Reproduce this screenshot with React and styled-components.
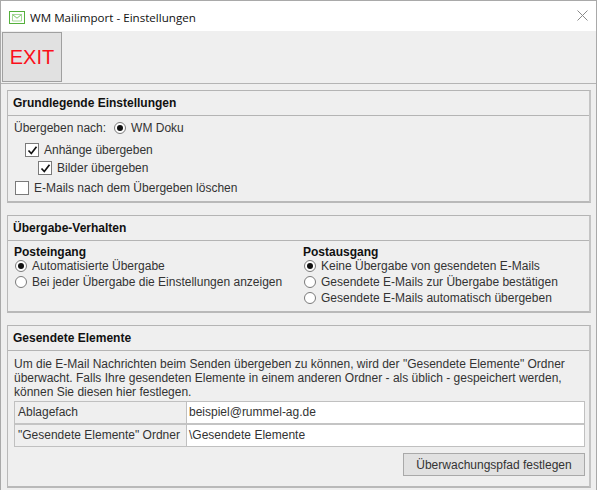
import React from "react";
import styled, { createGlobalStyle } from "styled-components";

const Global = createGlobalStyle`
  html, body { margin: 0; padding: 0; background: #efefef; }
  body { font-family: "Liberation Sans", Arial, sans-serif; }
`;

const Win = styled.div`
  width: 597px;
  height: 490px;
  box-sizing: border-box;
  border: 1px solid #a9a9a9;
  border-bottom: 0;
  background: #efefef;
  display: flex;
  flex-direction: column;
  overflow: hidden;
`;

const TitleBar = styled.div`
  height: 30px;
  flex: none;
  background: #fff;
  display: flex;
  align-items: center;
  padding: 0 8px 0 8px;
  gap: 5px;
`;

const Title = styled.div`
  font-family: "Open Sans", "Noto Sans", sans-serif;
  font-size: 11.6px;
  color: #111;
  flex: 1;
  margin-top: 3px;
`;

const Toolbar = styled.div`
  height: 53px;
  flex: none;
  box-sizing: border-box;
  border-bottom: 1px solid #b4b4b4;
  padding: 1px 0 0 1px;
`;

const ExitButton = styled.button`
  display: block;
  width: 60px;
  height: 50px;
  box-sizing: border-box;
  background: #e1e1e1;
  border: 1px solid #a0a0a0;
  color: #fb0f1a;
  font-family: "Liberation Sans", sans-serif;
  font-size: 20px;
  padding: 0;
`;

const Content = styled.div`
  padding: 6px 5px 0 6px;
  display: flex;
  flex-direction: column;
  gap: 12px;
`;

const Section = styled.section`
  height: ${(p) => p.$h}px;
  box-sizing: border-box;
  border-style: solid;
  border-width: 1px 2px 2px 1px;
  border-color: #b4b4b4 #c4c4c4 #b9b9b9 #b9b9b9;
  display: flex;
  flex-direction: column;
`;

const SectionHead = styled.h2`
  height: 25px;
  flex: none;
  box-sizing: border-box;
  margin: 0;
  padding: 0 0 0 5px;
  border-bottom: 1px solid #b4b4b4;
  font-size: 12px;
  font-weight: bold;
  line-height: 24px;
  color: #111;
`;

const SectionBody = styled.div`
  padding: ${(p) => p.$pad};
  font-size: 12px;
  color: #333;
`;

const Row = styled.div`
  display: flex;
  align-items: center;
  height: 16px;
  margin-top: ${(p) => p.$top || 0}px;
  padding-left: ${(p) => p.$indent || 0}px;
  gap: ${(p) => p.$gap || 5}px;
  white-space: nowrap;
`;

const Box = styled.span`
  width: 14px;
  height: 14px;
  flex: none;
  box-sizing: border-box;
  background: #fff;
  border: 1px solid #7a7a7a;
  display: flex;
  align-items: center;
  justify-content: center;
`;

const Radio = styled.span`
  width: 12px;
  height: 12px;
  flex: none;
  box-sizing: border-box;
  border-radius: 50%;
  background: #fff;
  border: 1px solid #7a7a7a;
  display: flex;
  align-items: center;
  justify-content: center;
  &::after {
    content: "";
    display: ${(p) => (p.$on ? "block" : "none")};
    width: 6px;
    height: 6px;
    border-radius: 50%;
    background: #111;
  }
`;

const Columns = styled.div`
  display: grid;
  grid-template-columns: 289px 1fr;
  padding: 4px 0 0 6px;
  font-size: 12px;
  color: #333;
`;

const GroupLabel = styled.div`
  font-weight: bold;
  color: #111;
  height: 13px;
  line-height: 14px;
`;

const RadioRow = styled.div`
  display: flex;
  align-items: center;
  gap: 5px;
  height: 16px;
  padding-left: 1px;
  white-space: nowrap;
`;

const Hint = styled.p`
  margin: 0;
  line-height: 14px;
  font-size: 12px;
  color: #333;
`;

const Table = styled.div`
  margin-top: 2px;
  display: grid;
  grid-template-columns: 171px 1fr;
  border: 1px solid #c0c0c0;
`;

const Cell = styled.div`
  height: ${(p) => (p.$second ? 23 : 21)}px;
  box-sizing: border-box;
  padding: ${(p) => (p.$field ? "0 2px" : "0 3px")};
  line-height: 21px;
  font-size: 12px;
  color: #333;
  background: ${(p) => (p.$field ? "#fff" : "#efefef")};
  border-left: ${(p) => (p.$field ? "1px solid #c0c0c0" : "0")};
  border-top: ${(p) => (p.$second ? "2px solid #c4c4c4" : "0")};
  white-space: nowrap;
`;

const ButtonRow = styled.div`
  display: flex;
  justify-content: flex-end;
  margin-top: 6px;
`;

const PathButton = styled.button`
  width: 182px;
  height: 23px;
  box-sizing: border-box;
  background: #e1e1e1;
  border: 1px solid #a9a9a9;
  font-family: "Liberation Sans", sans-serif;
  font-size: 12px;
  color: #333;
  padding: 0;
`;

const MailIcon = () => (
  <svg width="16" height="13" viewBox="0 0 16 13" fill="none" style={{ marginTop: 3 }}>
    <rect x="0.5" y="0.5" width="15" height="12" stroke="#55b03c" />
    <path d="M3.5 3.5h9v6.5h-9z" stroke="#a6d898" />
    <path d="M3.5 3.5L8 7.2l4.5-3.7" stroke="#7cc46a" />
  </svg>
);

const CloseIcon = () => (
  <svg width="11" height="11" viewBox="0 0 11 11" fill="none" style={{ marginBottom: 2 }}>
    <path d="M0.5 0.5l10 10M10.5 0.5l-10 10" stroke="#8a8a8a" strokeWidth="1" />
  </svg>
);

const Check = () => (
  <svg width="11" height="11" viewBox="0 0 11 11" fill="none">
    <path d="M1.5 5.5l2.8 3L9.5 1.8" stroke="#111" strokeWidth="1.7" />
  </svg>
);

export default function App() {
  return (
    <>
      <Global />
      <Win>
        <TitleBar>
          <MailIcon />
          <Title>WM Mailimport - Einstellungen</Title>
          <CloseIcon />
        </TitleBar>
        <Toolbar>
          <ExitButton>EXIT</ExitButton>
        </Toolbar>
        <Content>
          <Section $h={113}>
            <SectionHead>Grundlegende Einstellungen</SectionHead>
            <SectionBody $pad="4px 5px 0 6px">
              <Row $gap={7}>
                <span>Übergeben nach:</span>
                <RadioRow>
                  <Radio $on />
                  <span>WM Doku</span>
                </RadioRow>
              </Row>
              <Row $indent={11} $top={6}>
                <Box><Check /></Box>
                <span>Anhänge übergeben</span>
              </Row>
              <Row $indent={24} $top={2}>
                <Box><Check /></Box>
                <span>Bilder übergeben</span>
              </Row>
              <Row $indent={1} $top={4}>
                <Box />
                <span>E-Mails nach dem Übergeben löschen</span>
              </Row>
            </SectionBody>
          </Section>

          <Section $h={98}>
            <SectionHead>Übergabe-Verhalten</SectionHead>
            <Columns>
              <div>
                <GroupLabel>Posteingang</GroupLabel>
                <RadioRow><Radio $on /><span>Automatisierte Übergabe</span></RadioRow>
                <RadioRow><Radio /><span>Bei jeder Übergabe die Einstellungen anzeigen</span></RadioRow>
              </div>
              <div>
                <GroupLabel>Postausgang</GroupLabel>
                <RadioRow><Radio $on /><span>Keine Übergabe von gesendeten E-Mails</span></RadioRow>
                <RadioRow><Radio /><span>Gesendete E-Mails zur Übergabe bestätigen</span></RadioRow>
                <RadioRow><Radio /><span>Gesendete E-Mails automatisch übergeben</span></RadioRow>
              </div>
            </Columns>
          </Section>

          <Section $h={163}>
            <SectionHead>Gesendete Elemente</SectionHead>
            <SectionBody $pad="6px 4px 0 6px">
              <Hint>
                Um die E-Mail Nachrichten beim Senden übergeben zu können, wird der "Gesendete Elemente" Ordner
                <br />
                überwacht. Falls Ihre gesendeten Elemente in einem anderen Ordner - als üblich - gespeichert werden,
                <br />
                können Sie diesen hier festlegen.
              </Hint>
              <Table>
                <Cell>Ablagefach</Cell>
                <Cell $field>beispiel@rummel-ag.de</Cell>
                <Cell $second>"Gesendete Elemente" Ordner</Cell>
                <Cell $field $second>\Gesendete Elemente</Cell>
              </Table>
              <ButtonRow>
                <PathButton>Überwachungspfad festlegen</PathButton>
              </ButtonRow>
            </SectionBody>
          </Section>
        </Content>
      </Win>
    </>
  );
}
